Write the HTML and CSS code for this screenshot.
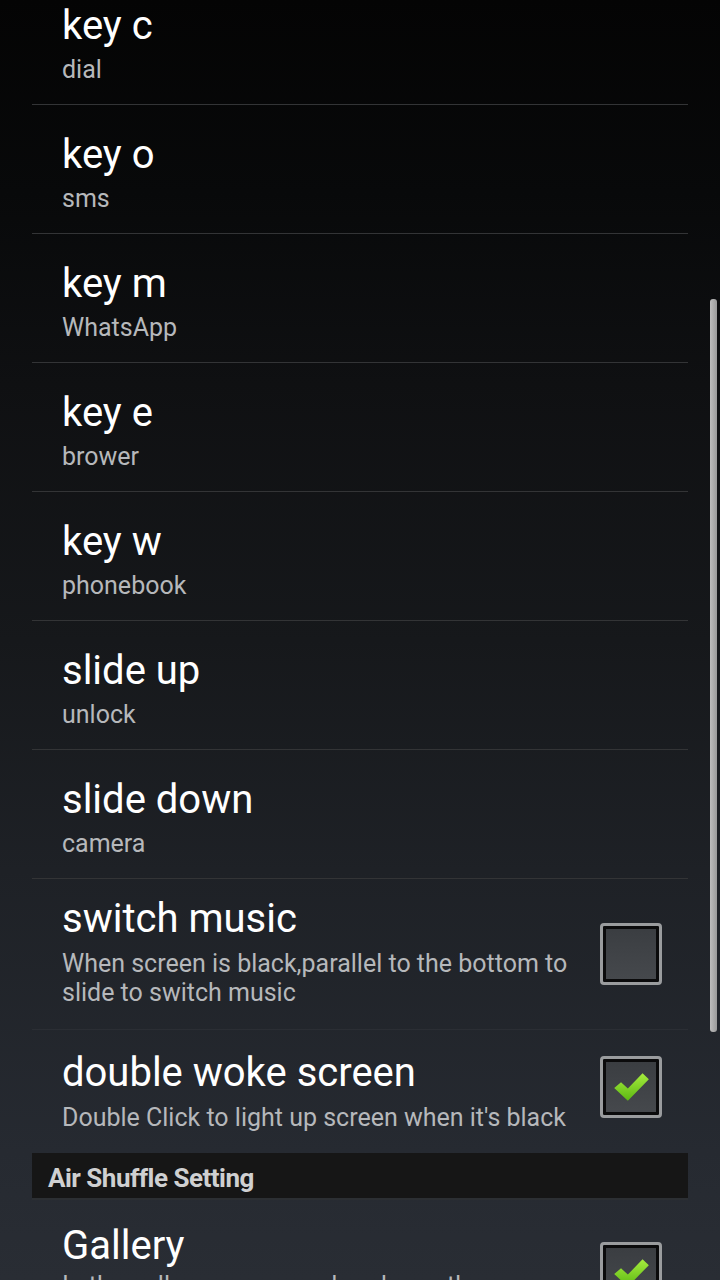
FILE: index.html
```html
<!DOCTYPE html>
<html>
<head>
<meta charset="utf-8">
<link rel="stylesheet" href="styles.css">
</head>
<body>
<div class="screen">
  <div class="list">
    <div class="row"><div class="text"><div class="title">key c</div><div class="sub">dial</div></div></div>
    <div class="row"><div class="text"><div class="title">key o</div><div class="sub">sms</div></div></div>
    <div class="row"><div class="text"><div class="title">key m</div><div class="sub">WhatsApp</div></div></div>
    <div class="row"><div class="text"><div class="title">key e</div><div class="sub">brower</div></div></div>
    <div class="row"><div class="text"><div class="title">key w</div><div class="sub">phonebook</div></div></div>
    <div class="row"><div class="text"><div class="title">slide up</div><div class="sub">unlock</div></div></div>
    <div class="row"><div class="text"><div class="title">slide down</div><div class="sub">camera</div></div></div>
    <div class="row check-row">
      <div class="text"><div class="title">switch music</div><div class="sub">When screen is black,parallel to the bottom to slide to switch music</div></div>
      <div class="checkbox"></div>
    </div>
    <div class="row check-row last">
      <div class="text"><div class="title">double woke screen</div><div class="sub">Double Click to light up screen when it's black</div></div>
      <div class="checkbox checked">
        <svg viewBox="0 0 40 40" width="42" height="42"><defs><linearGradient id="g1" x1="0" y1="0" x2="0" y2="1"><stop offset="0" stop-color="#a6ec3e"/><stop offset="1" stop-color="#5cb812"/></linearGradient></defs><path d="M4 21 L10.5 15.5 L17 21.5 L31 7 L37 12.5 L17 33 Z" fill="url(#g1)"/></svg>
      </div>
    </div>
    <div class="section">Air Shuffle Setting</div>
    <div class="row check-row gallery">
      <div class="text"><div class="title">Gallery</div><div class="sub">In the gallery, wave your hand over the screen to switch pictures</div></div>
      <div class="checkbox checked">
        <svg viewBox="0 0 40 40" width="42" height="42"><defs><linearGradient id="g2" x1="0" y1="0" x2="0" y2="1"><stop offset="0" stop-color="#a6ec3e"/><stop offset="1" stop-color="#5cb812"/></linearGradient></defs><path d="M4 21 L10.5 15.5 L17 21.5 L31 7 L37 12.5 L17 33 Z" fill="url(#g2)"/></svg>
      </div>
    </div>
  </div>
  <div class="scrollbar"></div>
</div>
</body>
</html>
```
FILE: styles.css
```css
html, body {
  margin: 0;
  padding: 0;
}
body {
  width: 720px;
  height: 1280px;
  overflow: hidden;
  font-family: Roboto, "Noto Sans", sans-serif;
  background: linear-gradient(180deg, #040404 0%, #08090a 15%, #0f1012 30%, #16181b 50%, #1e2126 68%, #262a31 90%, #292d34 100%);
}
.screen {
  position: relative;
  width: 720px;
  height: 1280px;
  overflow: hidden;
}
.list {
  margin: -24px 32px 0 32px;
  display: flex;
  flex-direction: column;
}
.row {
  display: flex;
  align-items: center;
  height: 128px;
  box-sizing: content-box;
  border-bottom: 1px solid #333436;
  padding: 0 30px;
}
.row .text {
  flex: 1;
  display: flex;
  flex-direction: column;
  padding-top: 26px;
  padding-bottom: 20px;
  box-sizing: border-box;
  height: 100%;
}
.title {
  font-size: 40px;
  line-height: 48px;
  color: #ffffff;
}
.sub {
  font-size: 25px;
  line-height: 29px;
  margin-top: 5px;
  color: #b6b8bb;
}
.check-row {
  height: auto;
  border-bottom: 1px solid rgba(60, 64, 70, 0.35);
  padding-right: 26px;
}
.check-row .text {
  height: auto;
  padding-top: 16px;
  padding-bottom: 22px;
}
.check-row .sub {
  margin-top: 6px;
  padding-right: 10px;
}
.check-row.last {
  border-bottom: none;
}
.check-row.last .text {
  padding-top: 19px;
  padding-bottom: 21px;
}
.check-row.last .checkbox {
  margin-bottom: 9px;
}
.checkbox {
  flex: none;
  width: 56px;
  height: 56px;
  border: 3px solid #9a9c9e;
  border-radius: 4px;
  background: linear-gradient(180deg, #3a3d41, #46494d);
  box-shadow: inset 0 0 0 3px #0b0b0c;
  display: flex;
  align-items: center;
  justify-content: center;
}
.section {
  height: 45px;
  background: #161616;
  border-bottom: 2px solid #2c2f33;
  color: #cfd0d1;
  font-size: 26px;
  font-weight: bold;
  letter-spacing: -0.5px;
  line-height: 50px;
  padding-left: 16px;
  box-sizing: content-box;
}
.gallery {
  align-items: flex-start;
  border-bottom: none;
}
.gallery .checkbox {
  margin-top: 42px;
}
.gallery .text {
  padding-top: 22px;
}
.gallery .sub {
  margin-top: 1px;
}
.scrollbar {
  position: absolute;
  left: 710px;
  top: 299px;
  width: 7px;
  height: 733px;
  border-radius: 3px;
  background: linear-gradient(90deg, #bdbdbd, #9a9a9a);
}
```
